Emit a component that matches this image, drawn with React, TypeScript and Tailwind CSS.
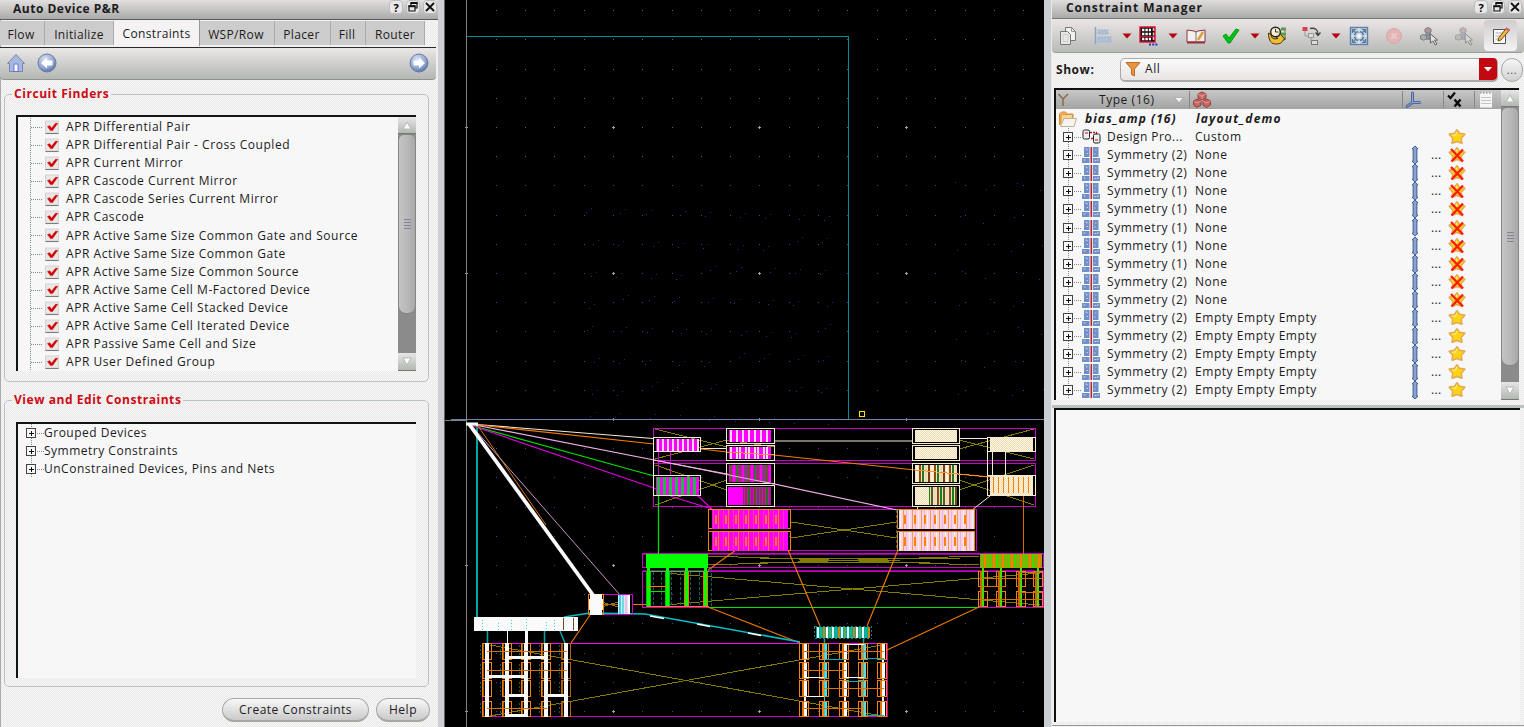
import React from "react";

const FINDERS = [
  "APR Differential Pair",
  "APR Differential Pair - Cross Coupled",
  "APR Current Mirror",
  "APR Cascode Current Mirror",
  "APR Cascode Series Current Mirror",
  "APR Cascode",
  "APR Active Same Size Common Gate and Source",
  "APR Active Same Size Common Gate",
  "APR Active Same Size Common Source",
  "APR Active Same Cell M-Factored Device",
  "APR Active Same Cell Stacked Device",
  "APR Active Same Cell Iterated Device",
  "APR Passive Same Cell and Size",
  "APR User Defined Group",
];

const TABS = [
  { name: "Flow", cls: "w-[45px] pr-[2px]" },
  { name: "Initialize", cls: "w-[69px]" },
  { name: "Constraints", cls: "w-[86px]" },
  { name: "WSP/Row", cls: "w-[75px] pr-[2px]" },
  { name: "Placer", cls: "w-[56px] pr-[2px]" },
  { name: "Fill", cls: "w-[35px] pr-[2px]" },
  { name: "Router", cls: "w-[59px]" },
];

const ROWS = [2, 2, 1, 1, 1, 1, 1, 2, 2, 2, 2, 2, 2, 2].map((n, i) => ({
  n,
  empty: i > 8,
}));

const PAPER =
  "bg-[repeating-conic-gradient(#ece9e9_0_25%,#f7f6f6_0_50%)] bg-[length:2px_2px]";

function WindowButtons() {
  const box =
    "flex h-[14px] w-[14px] items-center justify-center rounded-[4px] border border-[#bdbdbd] bg-[#e9e7e7]";
  return (
    <div className="flex gap-[3px]">
      <span className={box + " text-[11px] font-bold leading-[13px] tracking-normal text-black"}>?</span>
      <span className={box}>
        <svg width="10" height="10" viewBox="0 0 10 10" fill="none" stroke="#111">
          <path d="M3 3V1h6v5H7" strokeWidth="1.2" />
          <path d="M2.5 1h7" strokeWidth="2" />
          <path d="M1 4h6v5H1z" strokeWidth="1.2" />
          <path d="M.5 4.2h7" strokeWidth="2" />
        </svg>
      </span>
      <span className={box}>
        <svg width="10" height="10" viewBox="0 0 10 10" stroke="#111" strokeWidth="1.8">
          <path d="M1 1l8 8M9 1l-8 8" />
        </svg>
      </span>
    </div>
  );
}

function Expander() {
  return (
    <svg width="18" height="18" viewBox="0 0 18 18" className="shrink-0" shapeRendering="crispEdges">
      <path d="M5.500 0v18M11 9.500h7" stroke="#888" strokeDasharray="1 1" />
      <rect x="0.500" y="4.500" width="9" height="9" fill="#f7f7f7" stroke="#444" />
      <path d="M3 9h5v1h-5zM5 7h1v5h-1z" fill="#111" />
    </svg>
  );
}

function CheckRow({ label }: { label: string }) {
  return (
    <div className="flex h-[18.08px] items-center">
      <svg width="45" height="18.1" viewBox="0 0 45 18" className="shrink-0">
        <path d="M11.500 0v18M12 9.500h11" stroke="#888" strokeDasharray="1 1" shapeRendering="crispEdges" />
        <rect x="26.500" y="3" width="13" height="12" fill="#e9e6e6" stroke="#d5d1d1" />
        <path d="M26.500 15.500h13" stroke="#777" />
        <path d="M28.500 8.500l2.300-.8 1.700 2.500L36.500 5.300h2.200L33.500 12.500h-2z" fill="#d20000" stroke="#d20000" strokeWidth=".5" />
      </svg>
      <span className="pl-[2px]">{label}</span>
    </div>
  );
}

function ArrowCap({ down }: { down?: boolean }) {
  return (
    <div
      className={
        "flex w-full shrink-0 items-center justify-center bg-gradient-to-b from-[#e6e6e6] to-[#b4b7b4] border-b border-[#777] " +
        (down ? "h-[18px]" : "h-[17px]")
      }
    >
      <svg width="12" height="9" viewBox="0 0 12 9">
        {down ? (
          <path d="M2 1h8L6 8z" fill="#fcfcfc" stroke="#b5bab5" />
        ) : (
          <path d="M2 8h8L6 1z" fill="#fcfcfc" stroke="#b5bab5" />
        )}
      </svg>
    </div>
  );
}

function Scrollbar({ thumb }: { thumb: string }) {
  return (
    <div className="flex w-[18px] shrink-0 flex-col bg-[#8b8b8b]">
      <ArrowCap />
      <div
        className={
          "flex w-full items-center justify-center rounded-b-[8px] rounded-t-[6px] border border-[#868686] bg-gradient-to-r from-[#c4c4c4] via-[#b9b9b9] to-[#a8a8a8] " +
          thumb
        }
      >
        <div className="flex flex-col gap-[2px]">
          <i className="block h-px w-[7px] bg-[#848494]" />
          <i className="block h-px w-[7px] bg-[#848494]" />
          <i className="block h-px w-[7px] bg-[#848494]" />
          <i className="block h-px w-[7px] bg-[#848494]" />
        </div>
      </div>
      <div className="mt-auto">
        <ArrowCap down />
      </div>
    </div>
  );
}

function RoundArrow({ left }: { left?: boolean }) {
  return (
    <svg width="20" height="20" viewBox="0 0 20 20">
      <defs>
        <radialGradient id="ball" cx=".4" cy=".3" r=".8">
          <stop offset="0" stopColor="#dbe4f2" />
          <stop offset=".6" stopColor="#8fa5cf" />
          <stop offset="1" stopColor="#3f5c9c" />
        </radialGradient>
      </defs>
      <circle cx="10" cy="10" r="9" fill="url(#ball)" stroke="#6a7ca5" />
      <path
        d="M16 10l-6-5.500v3H4.500v5H10v3z"
        fill="#fff"
        transform={left ? "translate(20 0) scale(-1 1)" : undefined}
      />
    </svg>
  );
}

function Group({ title, cls, children }: { title: string; cls: string; children: React.ReactNode }) {
  return (
    <fieldset className={"ml-1 w-[425px] rounded-[5px] border border-[#b9c2c6] " + cls}>
      <legend className="ml-[7px] h-[14px] px-[2px] text-[12px] font-bold leading-[14px] tracking-[0.55px] text-[#cc0a14]">
        {title}
      </legend>
      {children}
    </fieldset>
  );
}

function LeftPanel() {
  return (
    <section className={"flex h-full w-[438px] shrink-0 flex-col shadow-[inset_1px_0_0_#aaa] " + PAPER}>
      <div className="flex h-[20px] items-start justify-between border-b border-[#5a5a5a] bg-gradient-to-b from-[#e2dfdf] to-[#a9aba9] pl-[13px] pr-[1px]">
        <span className="text-[12px] font-bold leading-[18px] tracking-[0.5px]">Auto Device P&amp;R</span>
        <WindowButtons />
      </div>
      <div className="flex h-[26px]">
        {TABS.map((t) => (
          <div
            key={t.name}
            className={
              "flex items-center justify-center border-r text-[12px] tracking-[0.35px] " +
              t.cls +
              (t.name === "Constraints"
                ? " h-[26px] border-[#999] bg-[#f4f2f2] pt-[2px]"
                : " mt-px h-[24px] border-[#aaa] bg-[#cdcccc] pt-[3px]")
            }
          >
            {t.name}
          </div>
        ))}
      </div>
      <div className="mt-[1px] h-[1px] w-[436px] shrink-0 bg-[#2b2b2b]" />
      <div className="flex h-[32px] w-[436px] shrink-0 items-center rounded-b-[4px] border-b border-[#8f938f] bg-gradient-to-b from-[#ebe7e7] to-[#b3b7b3] pb-[1px] pl-[6px] pr-[7px]">
        <svg width="20" height="20" viewBox="0 0 20 20">
          <path d="M1.500 10.500L10 1.500l8.500 9h-2v8h-13v-8z" fill="#a8b9e0" stroke="#7386b5" />
          <path d="M8 11h4v7.500H8z" fill="#fff" stroke="#6c6cd0" />
        </svg>
        <div className="ml-[11px]">
          <RoundArrow left />
        </div>
        <div className="ml-auto">
          <RoundArrow />
        </div>
      </div>
      <Group title="Circuit Finders" cls="mt-[7px] h-[295px]">
        <div className="ml-[11px] mt-[14px] flex h-[256px] w-[400px] overflow-hidden border-l-2 border-t-2 border-[#101414] bg-[#f7f7f7]">
          <div className="flex-1 pl-[1px] pt-[1px]">
            {FINDERS.map((f) => (
              <CheckRow key={f} label={f} />
            ))}
          </div>
          <Scrollbar thumb="h-[180px]" />
        </div>
      </Group>
      <Group title="View and Edit Constraints" cls="mt-[11px] h-[294px]">
        <div className="ml-[11px] mt-[15px] h-[256px] w-[400px] border-l-2 border-t-2 border-[#101414] bg-[#f7f7f7] pl-[8px]">
          {["Grouped Devices", "Symmetry Constraints", "UnConstrained Devices, Pins and Nets"].map((t) => (
            <div key={t} className="flex h-[18.08px] items-center tracking-[0.5px]">
              <Expander />
              <span>{t}</span>
            </div>
          ))}
        </div>
      </Group>
      <div className="mt-[11px] flex justify-end gap-[7px] pr-[8px] text-[12px]">
        <button className="h-[24px] w-[147px] rounded-full border border-b-2 border-[#a5a8a5] bg-gradient-to-b from-[#f8f8f8] to-[#c9cac9] tracking-[0.5px]">
          Create Constraints
        </button>
        <button className="h-[24px] w-[54px] rounded-full border border-b-2 border-[#a5a8a5] bg-gradient-to-b from-[#f8f8f8] to-[#c9cac9] tracking-[0.5px]">
          Help
        </button>
      </div>
    </section>
  );
}

/* ---------- layout canvas ---------- */

function Stripes({
  x,
  y,
  w,
  h,
  base,
  colors,
  step = 4,
  bar = 2,
}: {
  x: number;
  y: number;
  w: number;
  h: number;
  base: string;
  colors: string[];
  step?: number;
  bar?: number;
}) {
  const bars: React.ReactNode[] = [];
  for (let i = 0; i * step + bar < w; i++) {
    bars.push(
      <rect key={i} x={x + 1 + i * step} y={y} width={bar} height={h} fill={colors[i % colors.length]} />
    );
  }
  return (
    <g>
      <rect x={x} y={y} width={w} height={h} fill={base} />
      {bars}
    </g>
  );
}

const Box = ({ x, y, w, h, c }: { x: number; y: number; w: number; h: number; c: string }) => (
  <rect x={x + 0.5} y={y + 0.5} width={w} height={h} fill="none" stroke={c} />
);

const FG = "#ff8000";
const MG = "#c800c8";
const CREAM = "#f5ead0";

function Canvas() {
  const dots: React.ReactNode[] = [];
  for (let i = 0; i < 20; i++) {
    for (let j = -14; j < 15; j++) {
      const x = Math.round(466.4 + i * 29.3);
      const y = Math.round(419 + j * 29.2);
      if (i % 5 === 0 && j % 5 === 0) {
        dots.push(<path key={i + "," + j} d={`M${x - 1} ${y}h3v1h-3zM${x} ${y - 1}h1v3h-1z`} fill="#a0a0a8" />);
      } else if (i > 0) {
        dots.push(<rect key={i + "," + j} x={x} y={y} width="1" height="1" fill={j < -8 ? "#66666a" : "#45459a"} />);
      }
    }
  }
  const specks: React.ReactNode[] = [];
  for (let r = 0; r < 8; r++) {
    for (let c = 0; c < 9; c++) {
      const x = 586 + c * 29.3 + ((r * 7 + c * 5) % 9);
      const y = 212 + r * 29 + ((c * 11 + r * 3) % 10);
      specks.push(<rect key={r + "a" + c} x={Math.round(x)} y={Math.round(y)} width="1" height="1" fill="#0a3a9a" />);
      specks.push(<rect key={r + "b" + c} x={Math.round(x + 5)} y={Math.round(y - 4)} width="1" height="1" fill="#08307c" />);
    }
    for (let c = 0; c < 4; c++) {
      const x = 955 + c * 28 + ((r * 5 + c * 3) % 8);
      const y = 182 + r * 29 + ((c * 7 + r * 5) % 13);
      specks.push(<rect key={r + "c" + c} x={Math.round(x)} y={Math.round(y)} width="1" height="1" fill="#0a3a9a" />);
    }
  }
  const rowsY = [
    [643, 16],
    [662, 16],
    [680, 16],
    [701, 15],
  ];
  const white = "#fafafa";
  return (
    <svg width="599" height="727" viewBox="445 0 599 727" className="block shrink-0 bg-black" shapeRendering="crispEdges">
      <defs>
        <pattern id="grain" width="2" height="2" patternUnits="userSpaceOnUse">
          <rect width="2" height="2" fill="#efdcae" />
          <path d="M0 0h1v1H0zM1 1h1v1H1z" fill="#fff8ea" />
        </pattern>
      </defs>
      {dots}
      {specks}
      <path d="M467 36.500H848.500V419" fill="none" stroke="#008c94" />
      <path d="M466.500 0V727M445 420.500h22" stroke="#808080" />
      <path d="M451 419.500H1044" stroke="#7480a8" />
      <rect x="859.500" y="411.500" width="5" height="5" fill="#000" stroke="#ffe000" />

      {/* frames */}
      <Box x={653} y={428} w={382} h={32} c={MG} />
      <Box x={653} y={463} w={382} h={43} c={MG} />
      <Box x={708} y={509} w={268} h={41} c={MG} />
      <Box x={642} y={553} w={401} h={14} c={MG} />
      <Box x={642} y={571} w={401} h={36} c={MG} />
      <path d="M643 570.500h401M643 554.500h401" stroke="#8c008c" />
      <Box x={482} y={643} w={405} h={73} c={MG} />
      <path d="M482 643.500h405" stroke="#ff00ff" />
      <path d="M708 607.500h271" stroke="#00e800" />

      {/* diagonal guides */}
      <g stroke="#847c00" fill="none">
        <path d="M655 429L727 447M655 459L727 440M655 465L727 490M655 505L727 480M774 447L727 440" />
        <path d="M959 440L1034 459M959 449L1034 429M959 480L1034 505M959 490L1034 465" />
        <path d="M791 522L897 538M791 538L897 522" />
        <path d="M708 556L979 565M708 565L979 556M760 558.500H960M760 562.500H930M800 560.500H900" />
        <path d="M665 573L1040 605M665 605L1040 573" />
        <path d="M490 645L882 716M490 716L882 645" />
        <path d="M602 602l16 5M602 607l16-5" />
      </g>

      {/* flight lines */}
      <g fill="none" shapeRendering="auto">
        <path d="M477 424V617" stroke="#00a8a8" strokeWidth="2" />
        <path d="M470 424L653 438.500M774 441H913M959 438.500H988M701 448.500H727" stroke="#f5ead8" strokeWidth="1.200" />
        <path d="M470 424L654 444M701 449L727 452L774 455L915 470L990 477" stroke="#f47c00" strokeWidth="1.200" />
        <path d="M470 424L654 460L727 474L897 510" stroke="#f2b0e6" strokeWidth="1.200" />
        <path d="M470 425L654 476" stroke="#00dc00" strokeWidth="1.200" />
        <path d="M470 425L654 488L673 497L712 509M698 496L712 509" stroke="#dc00dc" strokeWidth="1.200" />
        <path d="M478 426L546 525" stroke="#d87000" />
        <path d="M470 424L620 595" stroke="#c896c4" />
        <path d="M469 424L593 595" stroke="#fafafa" strokeWidth="3.800" />
        <path d="M466 424h12" stroke="#fafafa" strokeWidth="3" />
        <path d="M658.500 495V554" stroke="#00dc00" strokeWidth="1.300" />
        <path d="M1023.500 496V554" stroke="#d86c00" />
        <path
          d="M736 550L708 570M788 550L820 626M898 550L867 626M708 607L800 643M979 607L887 650M590 615L571 643M632 604.500h14"
          stroke="#e87600"
          strokeWidth="1.200"
        />
        <path d="M564 617L590 613L645 614L800 642" stroke="#00c0c8" strokeWidth="1.500" />
        <path d="M650 616l14 2.500M697 624l13 2.500M748 633l13 2.500" stroke="#fff" strokeWidth="1.400" />
        <path d="M990 496L972 510M918 506L917 511" stroke={CREAM} />
        <path d="M487.500 631v14M544.500 631v14M560 631l5 12M824.500 638v8M863.500 638v8" stroke="#00a8a8" strokeWidth="1.500" />
      </g>

      {/* upper left */}
      <path d="M658.500 451v24M670.500 451v24" stroke={MG} />
      <Box x={653} y={437} w={47} h={14} c={CREAM} />
      <Box x={653} y={475} w={47} h={20} c={CREAM} />
      <path d="M653.500 451v24" stroke={CREAM} />
      <Stripes x={656} y={439} w={43} h={12} base="#ff00ff" colors={["#f0d8ee"]} step={5} bar={2} />
      <Stripes x={656} y={477} w={43} h={18} base="#ff00ff" colors={["#18c040"]} step={6} bar={3} />
      {[
        [428, 15, "#ff00ff", ["#fbd9f6", "#ff00ff"]],
        [445, 15, "#ff00ff", ["#fbd9f6", "#ff00ff", "#fbd9f6"]],
        [463, 20, "#d800d0", ["#70502c", "#ff00ff", "#387038"]],
        [485, 21, "#e000d8", ["#286c28", "#8b2a6c", "#704820"]],
      ].map((d) => (
        <g key={String(d[0])}>
          <Box x={726} y={d[0] as number} w={48} h={d[1] as number} c={CREAM} />
          <Stripes
            x={729}
            y={(d[0] as number) + 2}
            w={42}
            h={(d[1] as number) - 3}
            base={d[2] as string}
            colors={d[3] as string[]}
            step={3}
            bar={2}
          />
        </g>
      ))}
      <rect x="728" y="487" width="15" height="18" fill="#ff00ff" />

      {/* upper right */}
      {[428, 445].map((y) => (
        <g key={y}>
          <Box x={912} y={y} w={47} h={15} c={CREAM} />
          <rect x="915" y={y + 2} width="42" height="12" fill="url(#grain)" />
        </g>
      ))}
      {[
        [463, 20, "#f4e4c2", ["#f6efdc", "#8c4c10", "#1a7c20", "#e8d8b0", "#7c3c10"]],
        [485, 21, "#e8e0c0", ["#1a7c20", "#5c5c10", "#f0d8c8", "#8c4c10"]],
      ].map((d) => (
        <g key={String(d[0])}>
          <Box x={912} y={d[0] as number} w={47} h={d[1] as number} c={CREAM} />
          <Stripes
            x={915}
            y={(d[0] as number) + 2}
            w={42}
            h={(d[1] as number) - 3}
            base={d[2] as string}
            colors={d[3] as string[]}
            step={3}
            bar={2}
          />
        </g>
      ))}
      <rect x="915" y="487" width="14" height="18" fill="url(#grain)" />
      <Box x={987} y={437} w={48} h={14} c={CREAM} />
      <Box x={987} y={475} w={48} h={20} c={CREAM} />
      <path d="M987.500 451v24M992.500 451v24M1005.500 451v24" stroke={CREAM} />
      <rect x="990" y="438" width="43" height="13" fill="url(#grain)" />
      <rect x="990" y="476" width="43" height="19" fill="url(#grain)" />
      <Stripes x={992} y={477} w={40} h={16} base="transparent" colors={[FG]} step={5} bar={1} />
      <path d="M727 452L774 455M915 470L990 477" stroke="#ff9030" fill="none" />
      <path d="M654 460L774 484" stroke="#f2b0e6" fill="none" shapeRendering="auto" />

      {/* middle pair */}
      {[509, 531].map((y) => (
        <g key={y}>
          <Box x={708} y={y} w={82} h={19} c={FG} />
          <Stripes x={712} y={y + 1} w={76} h={19} base="#ff00ff" colors={["#ff30b0", FG]} step={5} bar={1} />
          <Stripes x={714} y={y + 6} w={70} h={9} base="transparent" colors={[FG]} step={10} bar={2} />
          <Box x={897} y={y} w={77} h={19} c={FG} />
          <Stripes x={899} y={y + 1} w={75} h={19} base="#f7d4e4" colors={["#fbeee8", "#ff9850", "#f4b0ec"]} step={3} bar={1} />
          <Stripes x={903} y={y + 6} w={66} h={9} base="transparent" colors={[FG]} step={10} bar={2} />
        </g>
      ))}
      <path d="M896.500 510v41" stroke="#007078" strokeDasharray="3 2" />

      {/* green row */}
      <rect x="646" y="554" width="62" height="14" fill="#00ff00" />
      <Stripes x={980} y={554} w={62} h={14} base="#b09a00" colors={["#58cc00", "#ff8000", "#3cdc00"]} step={3} bar={2} />
      {[647, 666, 685, 704].map((x, i) => (
        <g key={x}>
          <rect x={x - 1} y={571} width={5} height={36} fill={i > 1 ? "#e87800" : "#00c000"} />
          <rect x={x} y={568} width={3} height={39} fill="#00ff00" />
        </g>
      ))}
      <path d="M647 571.500h62M650 591.500h17" stroke="#00e800" />
      <path d="M647 586.500h20M647 606.500h62" stroke={FG} />
      <path
        d="M653.500 572v34M661.500 572v34M671.500 572v34M680.500 572v34M690.500 572v34M699.500 572v34M711.500 568v39"
        stroke="#006468"
        strokeDasharray="3 2"
      />
      {[982, 1000, 1020, 1037].map((x) => (
        <g key={x}>
          <Box x={x - 4} y={571} w={9} h={15} c={FG} />
          <Box x={x - 4} y={591} w={9} h={15} c={FG} />
          <rect x={x - 2} y={571} width={2} height={36} fill="#c86400" />
          <rect x={x} y={568} width={2} height={39} fill="#40e000" />
        </g>
      ))}
      <path d="M980 578.500h62M980 586.500h24M1018 572.500h24M980 599.500h62M1018 592.500h24" stroke="#d87000" />

      {/* junction block */}
      <Box x={588} y={594} w={44} h={20} c={MG} />
      <Box x={588} y={594} w={15} h={20} c={FG} />
      <path d="M590 594h12v5h1v11h-1v5h-12v-5h-1v-11h1z" fill={white} />
      <path d="M603 604.500h16" stroke="#b06000" />
      <Stripes x={618} y={595} w={12} h={19} base="#d4ecf4" colors={["#40d0e0", "#70d8e8", "#f4b8ec", "#fff"]} step={3} bar={2} />

      {/* lower left array */}
      <rect x="474" y="617" width="104" height="14" fill={white} />
      <path
        d="M482.500 620v10M498.500 623v7M511.500 620v10M526.500 619v12M546.500 622v8M554.500 620v10"
        stroke="#40d8dc"
        strokeDasharray="1 2"
      />
      <path d="M563.500 618v12M573.500 618v12" stroke="#7c4420" />
      {[487, 507, 526, 546, 566].map((x, i) => (
        <g key={x}>
          {rowsY.map(([y, h]) => (
            <g key={y}>
              <Box x={x - 5} y={y} w={9} h={h} c={i === 4 ? "#c06000" : FG} />
              <path d={`M${x - 3.5} ${y + 1}v${h - 1}`} stroke="#a85400" />
              <path d={`M${x - 6.5} ${y + 2}v${h - 3}`} stroke="#005c60" strokeDasharray="2 2" />
            </g>
          ))}
          <rect x={x - 2} y={643} width={4} height={74} fill={white} />
        </g>
      ))}
      <path d="M507.500 631v13" stroke={white} />
      <path d="M526 631v28" stroke={white} strokeWidth="3" />
      <path d="M505 657.500h42M487 676.500h40M507 695.500h19M546 695.500h22M507 715h20" stroke={white} strokeWidth="3" />
      <path d="M487 651.500h80M487 670.500h80M487 708.500h60" stroke="#d87000" />

      {/* lower right array */}
      <Stripes
        x={816}
        y={627}
        w={54}
        h={11}
        base="#00a8a0"
        colors={["#e8ffff", "#00b890", "#d88000", "#fff", "#50b060"]}
        step={3}
        bar={2}
      />
      <rect x="814.500" y="626.500" width="57" height="12" fill="none" stroke="#00888c" strokeDasharray="2 2" />
      {[804, 824, 844, 863, 882].map((x, i) => (
        <g key={x}>
          <rect x={x} y={643} width={i % 2 ? 1 : 2} height={74} fill={i % 2 ? "#20d4dc" : white} />
          {rowsY.map(([y, h]) => (
            <g key={y}>
              <Box x={x - 5} y={y} w={9} h={h} c={FG} />
              <rect x={x - 2} y={y} width={2} height={h} fill={i % 2 ? "#ff8000" : "#e47000"} />
              <rect x={x + 1} y={y + 1} width={2} height={h - 1} fill={i % 2 ? "#60dce0" : white} />
            </g>
          ))}
        </g>
      ))}
      <path d="M804 651.500h80M804 670.500h42M824 688.500h60M804 708.500h60" stroke="#e07400" />
      <path d="M826 659.500h18M846 681.500h18M866 658.500h18M866 715.500h18" stroke="#00b0b8" />
      <path d="M806 677.500h18M846 644.500h18M846 677.500h18M806 696.500h18" stroke={white} />
    </svg>
  );
}

/* ---------- constraint manager ---------- */

const DropMark = ({ cls }: { cls: string }) => (
  <svg width="10" height="6" viewBox="0 0 10 6" className={"shrink-0 " + cls}>
    <path d="M.5.500h9L5 5.500z" fill="#b80010" />
  </svg>
);

function Tool({ cls, children }: { cls: string; children: React.ReactNode }) {
  return (
    <svg width="22" height="22" viewBox="0 0 22 22" fill="none" className={"shrink-0 " + cls}>
      {children}
    </svg>
  );
}

function Pointer({ faded }: { faded?: boolean }) {
  return (
    <g opacity={faded ? 0.5 : 0.9}>
      <path d="M10 5L5 14h11z" fill="#9a9a9a" stroke="#777" />
      <path d="M10 2.500l3 1.500v3l-3 1.200L7 7V4z" fill="#b08f8c" stroke="#777" />
      <path d="M5.500 9.500l3 1.200V14l-3 1.200-3-1.200v-3.300z" fill="#9fb39c" stroke="#777" />
      <path d="M10.500 9.500l2 1v3l-2 1-2-1v-3z" fill="#7f8cb8" stroke="#777" />
      <path d="M12 8.500l7.500 6.500-3 .2 2.500 3.800-1.800 1-2.400-4-2.300 2z" fill="#e4e4e4" stroke="#555" />
    </g>
  );
}

function Toolbar() {
  return (
    <div className="flex h-[34px] shrink-0 items-center rounded-b-[4px] border-b border-[#999d99] bg-gradient-to-b from-[#ebe6e6] to-[#b8bbb8] pl-[5px]">
      <Tool cls="">
        <path d="M8.500 2.500h6l4 4v9h-10z" fill="#f2f2f0" stroke="#777" />
        <path d="M14.500 2.500v4h4" stroke="#999" />
        <path d="M3.500 6.500h7l3 3v10h-10z" fill="#e8e8e4" stroke="#777" />
        <path d="M6 9.500h5v7H6z" stroke="#ccc" />
      </Tool>
      <Tool cls="ml-[13px]">
        <path d="M3.500 2v17" stroke="#8ba0c4" strokeWidth="1.500" />
        <path d="M6 5h10v4H6zM6 12h13v5H6z" fill="#afbfd8" stroke="#9db0cf" strokeDasharray="2 1" />
      </Tool>
      <DropMark cls="ml-[8px]" />
      <Tool cls="ml-[6px]">
        <rect x="2" y="2" width="15" height="15" fill="#111" stroke="#e01030" strokeWidth="1.400" />
        <path d="M4 5h9M4 9h9M4 14h9" stroke="#fff" strokeWidth="2.400" strokeDasharray="2.400 1" />
        <path d="M3 11.600h13" stroke="#e01030" strokeWidth="1.200" />
        <path d="M15.500 3v13" stroke="#f0c0c8" strokeWidth="1.500" strokeDasharray="3 1.500" />
        <path d="M11 19.500h9" stroke="#3030d0" strokeWidth="2" strokeDasharray="2 1.200" />
      </Tool>
      <DropMark cls="ml-[8px]" />
      <Tool cls="ml-[7px]">
        <path d="M2 5l7 1 2 1 2-1 7-1v12H2z" fill="#f4eeee" stroke="#8d3845" />
        <path d="M2 17.500h18" stroke="#9c2c3c" strokeWidth="2" />
        <path d="M11 7v10" stroke="#777" />
        <path d="M13 15l5-8" stroke="#d8a030" strokeWidth="2.400" />
      </Tool>
      <Tool cls="ml-[13px]">
        <path d="M3 11l3-2 3 4 7-9 3 1-9 13H8z" fill="#00c018" stroke="#00a010" />
      </Tool>
      <DropMark cls="ml-[8px]" />
      <Tool cls="ml-[6px]">
        <path d="M15 4h5M15 9h5M14 13h6" stroke="#50a050" strokeWidth="3" />
        <path d="M19 5v8" stroke="#c06040" strokeDasharray="2 2" />
        <path d="M2.500 8c0 8 3 11 7.500 11 5 0 6.500-2 7-4l2-.5-5-6-4 5h2c-4 1-7 0-7-4z" fill="#f0bc30" stroke="#4a3808" />
        <circle cx="9.500" cy="7" r="4.800" fill="#f7efce" stroke="#222" strokeWidth="1.400" />
        <path d="M9.500 4v3h3" stroke="#333" />
      </Tool>
      <Tool cls="ml-[13px]">
        <rect x="1.500" y="2" width="5" height="4" fill="#d84050" />
        <rect x="7.500" y="8.500" width="5" height="4" fill="#ddd" stroke="#999" />
        <rect x="10.500" y="15.500" width="6" height="4" fill="#ddd" stroke="#777" />
        <path d="M4 6v5h3M10 13v4" stroke="#999" />
        <path d="M9 3.500c5-1 8 1 8 6M14.500 7.500l2.500 3 2.500-3" stroke="#444" strokeWidth="1.300" />
      </Tool>
      <DropMark cls="ml-[8px]" />
      <Tool cls="ml-[7px]">
        <rect x="2.500" y="2.500" width="17" height="17" fill="#c3d0de" stroke="#5f7ea4" strokeWidth="1.400" />
        <circle cx="11" cy="11" r="4.500" stroke="#55789f" strokeWidth="1.600" />
        <path d="M11 3v4M11 15v4M3 11h4M15 11h4" stroke="#d7e4f0" strokeWidth="1.600" />
        <path
          d="M4.500 8V4.500H8M14 4.500h3.500V8M17.500 14v3.500H14M8 17.500H4.500V14M4.500 4.500l3 3M17.500 4.500l-3 3M4.500 17.500l3-3M17.500 17.500l-3-3"
          stroke="#55789f"
          strokeWidth="1.200"
        />
        <path d="M11 8.500l2.500 2.500-2.500 2.500L8.500 11z" fill="#f4f8fc" />
      </Tool>
      <Tool cls="ml-[13px]">
        <circle cx="11" cy="11" r="7.500" fill="#e2b4b4" stroke="#dba6a6" />
        <path d="M8.500 8.500l5 5M13.500 8.500l-5 5" stroke="#eccaca" strokeWidth="2.200" />
      </Tool>
      <Tool cls="ml-[13px]">
        <Pointer />
      </Tool>
      <Tool cls="ml-[13px]">
        <Pointer faded />
      </Tool>
      <div className="ml-[9px] flex h-[31px] w-[33px] items-center justify-center rounded-[4px] bg-gradient-to-b from-[#cfcdcd] to-[#f4f2f2]">
        <Tool cls="">
          <path d="M3.500 4.500h12v14h-12z" fill="#fafafa" stroke="#555" />
          <path d="M5.500 8h7M5.500 11h5M5.500 14h3" stroke="#aaa" />
          <path d="M8 16l1-3.500L16.500 3l3 2L11 15z" fill="#f4b840" stroke="#6c4c18" />
          <path d="M16 3.500l3.500 2" stroke="#e06080" strokeWidth="2.500" />
        </Tool>
      </div>
    </div>
  );
}

function SymmetryIcon() {
  return (
    <svg width="18" height="16" viewBox="0 0 18 16" className="shrink-0">
      <g fill="#6e8fc8">
        <path d="M2 0h5.500v10H2zM11 0h5.500v10H11zM0 11h7.500v5H0zM11 11h7v5h-7z" />
      </g>
      <path d="M3.500 2H5v1.500M4.500 6.500H6M13 3h1.500M12 7h1.500M1.500 13h2M12.500 13.500h2M15 13h2" stroke="#c5d2ea" fill="none" />
      <path d="M8 0h2.600v16H8z" fill="#eadede" />
      <path d="M9.300 0v16" stroke="#b8252f" strokeWidth="1.500" />
    </svg>
  );
}

function Star({ crossed }: { crossed?: boolean }) {
  return (
    <svg width="18" height="18" viewBox="0 0 18 18" className="shrink-0" strokeLinejoin="round">
      <path
        d="M9 2l2.300 3.500 5.200.8-3.600 3.900.9 4.800L9 13.200 4.200 15l.9-4.800L1.500 6.300l5.200-.8z"
        fill="#fccf10"
        stroke="#e2a858"
        strokeWidth="2"
      />
      <path d="M9 2.500l2 3.600 4.800.6-3.400 3.500.9 4.100L9 12.500l-4.300 1.800.9-4.100-3.400-3.500L7 6.100z" fill="#fdd414" />
      <path d="M8.700 4L7.500 7.200H4.500" stroke="#fdf0a0" fill="none" />
      {crossed && <path d="M3 3l12 12.500M15 3.500L3.500 15.500" stroke="#fb1c08" strokeWidth="2.400" />}
    </svg>
  );
}

function AxisBar() {
  return (
    <svg width="8" height="18.1" viewBox="0 0 8 18" className="shrink-0">
      <path d="M4 0L7 2.800H5.900v12.400H7L4 18 1 15.200h1.100V2.800H1z" fill="#8aa4d0" stroke="#34508c" strokeWidth=".9" />
    </svg>
  );
}

function RightPanel() {
  return (
    <section className={"flex h-full w-[472px] shrink-0 flex-col " + PAPER}>
      <div className="flex h-[19px] shrink-0 items-start justify-between border-b border-[#777] bg-gradient-to-b from-[#e0dddd] to-[#a9aba9] pl-[14px] pr-[2px]">
        <span className="text-[12px] font-bold leading-[16px] tracking-[0.95px]">Constraint Manager</span>
        <WindowButtons />
      </div>
      <Toolbar />
      <div className="flex h-[35px] shrink-0 items-center pb-[2px] pl-[4px]">
        <span className="w-[64px] text-[12px] font-bold">Show:</span>
        <div className="flex h-[24px] w-[378px] items-center rounded-[5px] border border-b-2 border-[#a9a9ab] bg-gradient-to-b from-[#fafafa] to-[#e9e4e4] pl-[4px]">
          <svg width="16" height="16" viewBox="0 0 16 16">
            <path d="M1 1.500h14L9.500 8v7l-3-1.500V8z" fill="#e8923c" stroke="#b8702c" />
          </svg>
          <span className="pl-[4px] text-[12px]">All</span>
          <div className="ml-auto flex h-[22px] w-[18px] items-center justify-center rounded-r-[4px] bg-[#c20810]">
            <svg width="8" height="5" viewBox="0 0 8 5">
              <path d="M0 0h8L4 4.500z" fill="#fff" />
            </svg>
          </div>
        </div>
        <div className="ml-[3px] flex h-[24px] w-[22px] shrink-0 items-center justify-center rounded-full border border-[#a5a8a5] bg-gradient-to-b from-[#f6f6f6] to-[#cfd0cf] text-[11px] text-[#4c5c4c]">
          ...
        </div>
      </div>
      <div className="ml-[2px] flex h-[312px] w-[465px] shrink-0 overflow-hidden border-l-2 border-t-2 border-[#101010] bg-[#f7f7f7]">
        <div className="flex w-[446px] flex-col">
          <div className="mb-px flex h-[19px] shrink-0 items-center bg-gradient-to-b from-[#c6c7c6] to-[#a2a4a2]">
            <svg width="18" height="18" viewBox="0 0 18 18" fill="none">
              <path d="M2.500 3L7 8v7M12 3L7 8" stroke="#8a6a50" strokeWidth="1.500" />
            </svg>
            <span className="w-[82px] pl-[25px] text-[12px] whitespace-nowrap">Type (16)</span>
            <svg width="10" height="6" viewBox="0 0 10 6" className="ml-[18px]">
              <path d="M.5.500h9L5 5.500z" fill="#f4f4f4" stroke="#999" strokeWidth=".6" />
            </svg>
            <i className="ml-[5px] h-[17px] w-px bg-[#888]" />
            <svg width="20" height="18" viewBox="0 0 20 18" className="ml-[2px]" fill="#c86464" stroke="#963c3c">
              <path d="M10 1l4 2v4l-4 2-4-2V3zM5 8l4 2v4l-4 2.500L1.500 14v-4zM14.500 8l4 2v4l-4 2.500L11 14v-4z" />
              <path d="M6 3l4 2 4-2M10 5v3M1.500 10L5 12l4-2M11 10l3.500 2 4-2" fill="none" stroke="#e8a8a8" strokeWidth=".8" />
            </svg>
            <i className="ml-auto h-[17px] w-px bg-[#888]" />
            <svg width="20" height="18" viewBox="0 0 20 18" className="ml-[1px]" fill="none">
              <path d="M8.500 2v9.500M8.500 11.500h7M8.500 11.500L3 15.500" stroke="#4f68a0" strokeWidth="3" strokeLinecap="round" />
              <path d="M8.500 2v9.500M8.500 11.500h7M8.500 11.500L3 15.500" stroke="#8fa6d8" strokeLinecap="round" />
            </svg>
            <i className="ml-[19px] h-[17px] w-px bg-[#888]" />
            <svg width="18" height="18" viewBox="0 0 18 18" className="ml-[2px]" fill="none" stroke="#0a0a0a">
              <path d="M2 4.500l2.500 2.500L9 1.500" strokeWidth="2.200" />
              <path d="M8.500 8.500l6 7M14.500 8.500l-6 7" strokeWidth="2.400" />
            </svg>
            <i className="ml-[10px] h-[17px] w-px bg-[#888]" />
            <svg width="14" height="18" viewBox="0 0 14 18" className="ml-[4px] mr-[8px]">
              <path d="M1 1.500h12v15H1z" fill="#f6f6f6" />
              <path d="M1 2h12" stroke="#777" strokeDasharray="1.500 1.500" />
              <path d="M2 6.500h10M2 9.500h10M2 12.500h10" stroke="#c4c4c4" />
            </svg>
          </div>
          <div className="flex h-[18.08px] shrink-0 items-center font-bold italic tracking-[1.2px]">
            <svg width="20" height="17" viewBox="0 0 20 17" className="ml-[2px] shrink-0">
              <path d="M1.500 14V3l2-2h4l1.500 2h6v4" fill="#f6b45c" stroke="#d48830" />
              <path d="M3 14V5l1.500-1.500h10V6" fill="#fbd394" stroke="#d89848" />
              <path d="M2.500 15.500L6 7.500h12.500L16 15.500z" fill="#f7f4ec" stroke="#b9b4a4" />
            </svg>
            <span className="w-[118px] whitespace-nowrap pl-[7px] tracking-[1.05px]">bias_amp (16)</span>
            <span>layout_demo</span>
          </div>
          <div className="flex h-[18.08px] shrink-0 items-center">
            <div className="ml-[7px] flex">
              <Expander />
            </div>
            <svg width="20" height="16" viewBox="0 0 20 16" className="ml-[1px] shrink-0" fill="none">
              <path d="M8 3.500h7M9 9.500h3M14.500 3v3" stroke="#c01020" strokeDasharray="2 1" strokeWidth="1.300" />
              <rect x="1" y="1" width="6.500" height="9" rx="1.500" stroke="#222" fill="#eee" />
              <rect x="11.500" y="5" width="6.500" height="9" rx="1.500" stroke="#222" fill="#eee" />
              <path d="M3 4h3M13 11h3" stroke="#c01020" />
            </svg>
            <span className="w-[93px] whitespace-nowrap pl-[5px] tracking-[0.45px]">Design Pro...</span>
            <span>Custom</span>
            <span className="ml-auto mr-[35px]">
              <Star />
            </span>
          </div>
          {ROWS.map((r, i) => (
            <div key={i} className="flex h-[18.08px] shrink-0 items-center">
              <div className="ml-[7px] flex">
                <Expander />
              </div>
              <div className="ml-[1px]">
                <SymmetryIcon />
              </div>
              <span className="w-[95px] whitespace-nowrap pl-[7px]">Symmetry ({r.n})</span>
              <span className="whitespace-nowrap">{r.empty ? "Empty Empty Empty" : "None"}</span>
              <div className="ml-auto mr-[35px] flex items-center">
                <AxisBar />
                <span className="ml-[12px] mr-[7px] w-[10px] tracking-[0.3px]">...</span>
                <Star crossed={!r.empty} />
              </div>
            </div>
          ))}
        </div>
        <Scrollbar thumb="h-[259px]" />
      </div>
      <div className="mt-[5px] h-[3px] shrink-0 bg-[#bcc2c2]" />
      <div className="ml-[2px] h-[314px] w-[466px] shrink-0 border-l-2 border-t-2 border-[#101010] bg-[#f7f7f7]" />
      <div className="mt-[3px] h-px shrink-0 bg-[#999]" />
    </section>
  );
}

export default function App() {
  return (
    <main className="flex h-[727px] w-[1524px] overflow-hidden bg-[#f1efef] font-['Open_Sans','Noto_Sans',sans-serif] text-[12px] leading-[18px] tracking-[0.55px] text-[#1c1c1c]">
      <LeftPanel />
      <div className="h-full w-[7px] shrink-0 border-r border-[#5c665f] bg-[#cfd0d4]" />
      <Canvas />
      <div className="h-full w-[8px] shrink-0 border-r border-[#e8e8e8] bg-[#cbced0]" />
      <RightPanel />
    </main>
  );
}
